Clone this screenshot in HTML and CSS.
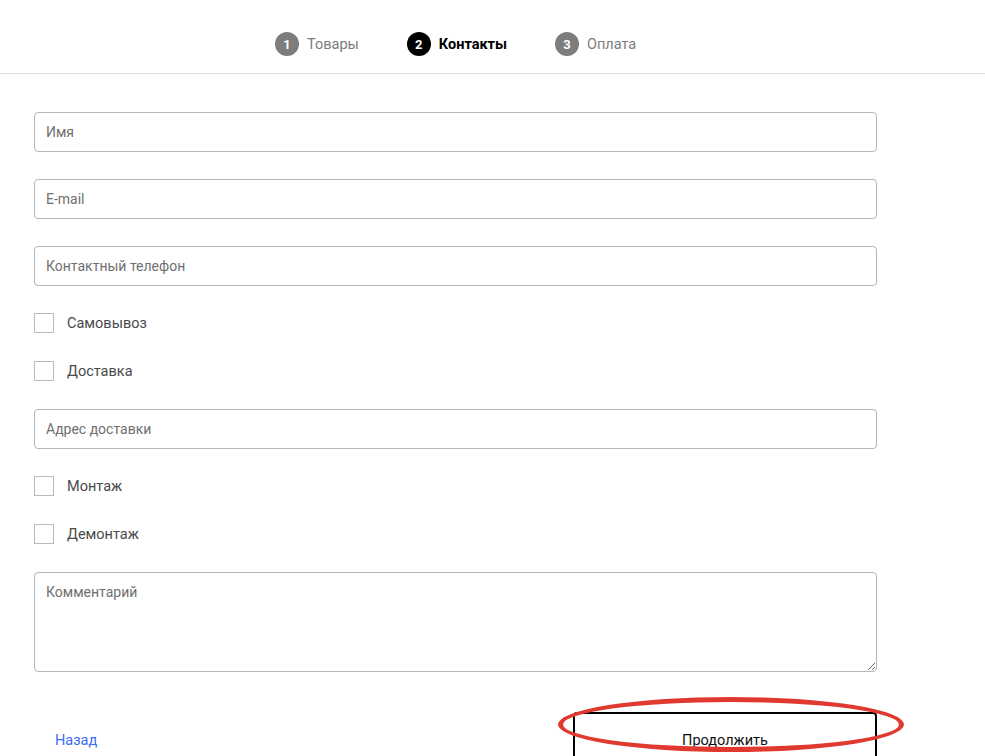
FILE: index.html
```html
<!DOCTYPE html>
<html lang="ru">
<head>
<meta charset="utf-8">
<title>Оформление заказа</title>
<link rel="stylesheet" href="styles.css">
</head>
<body>
<header class="steps">
  <div class="step"><span class="num">1</span><span class="label">Товары</span></div>
  <div class="step active"><span class="num">2</span><span class="label">Контакты</span></div>
  <div class="step"><span class="num">3</span><span class="label">Оплата</span></div>
</header>
<main class="form">
  <input class="field" type="text" placeholder="Имя">
  <input class="field" type="text" placeholder="E-mail">
  <input class="field" type="text" placeholder="Контактный телефон">
  <label class="check"><span class="box"></span><span class="text">Самовывоз</span></label>
  <label class="check"><span class="box"></span><span class="text">Доставка</span></label>
  <input class="field" type="text" placeholder="Адрес доставки">
  <label class="check"><span class="box"></span><span class="text">Монтаж</span></label>
  <label class="check"><span class="box"></span><span class="text">Демонтаж</span></label>
  <textarea class="field area" placeholder="Комментарий"></textarea>
  <div class="actions">
    <a class="back" href="#">Назад</a>
    <button class="next" type="button">Продолжить</button>
    <span class="mark"></span>
  </div>
</main>
</body>
</html>
```
FILE: styles.css
```css
html, body {
  margin: 0;
  padding: 0;
  background: #fff;
  font-family: Roboto, "Liberation Sans", sans-serif;
  overflow: hidden;
}
.steps {
  box-sizing: content-box;
  height: 41px;
  padding: 32px 0 0 275px;
  border-bottom: 1px solid #dcdcdc;
  display: flex;
  align-items: flex-start;
}
.step {
  display: flex;
  align-items: center;
  margin-right: 48px;
  height: 24px;
}
.num {
  width: 24px;
  height: 24px;
  border-radius: 50%;
  background: #7d7d7d;
  color: #fff;
  font-weight: 700;
  font-size: 13px;
  display: flex;
  align-items: center;
  justify-content: center;
  margin-right: 8px;
}
.label {
  font-size: 14.5px;
  color: #7d7d7d;
}
.step.active .num { background: #000; }
.step.active .label { color: #000; font-weight: 700; }
.form {
  width: 843px;
  margin: 38px 0 0 34px;
  display: flex;
  flex-direction: column;
  gap: 27px;
}
.field {
  box-sizing: border-box;
  width: 843px;
  height: 40px;
  border: 1px solid #adb8c0;
  border-radius: 4px;
  padding: 0 11px;
  font-family: Roboto, "Liberation Sans", sans-serif;
  font-size: 14px;
  color: #333;
  outline: none;
  margin: 0;
}
.field::placeholder { color: #707070; }
.area {
  height: 100px;
  padding: 11px 11px;
  resize: vertical;
  display: block;
}
.check {
  display: flex;
  align-items: flex-start;
  height: 21px;
  font-size: 14.5px;
  color: #4a4a4a;
}
.box {
  box-sizing: border-box;
  width: 20px;
  height: 20px;
  border: 1px solid #b3bcc3;
  margin-right: 13px;
}
.text { line-height: 20px; padding-top: 1px; }
.actions {
  position: relative;
  display: flex;
  align-items: flex-start;
  margin-top: 13px;
  height: 60px;
}
.back {
  color: #3a6cf4;
  text-decoration: none;
  font-size: 14.5px;
  margin: 20px 0 0 21px;
}
.next {
  margin-left: auto;
  width: 304px;
  height: 60px;
  border: 2px solid #000;
  border-radius: 4px;
  background: #fff;
  font-family: Roboto, "Liberation Sans", sans-serif;
  font-size: 14.5px;
  color: #111;
  padding: 18px 0 0;
  display: flex;
  justify-content: center;
  align-items: flex-start;
}
.mark {
  position: absolute;
  left: 524px;
  top: -15px;
  width: 346px;
  height: 55px;
  border: 5px solid #e0392f;
  border-radius: 50%;
  box-sizing: border-box;
}
```
